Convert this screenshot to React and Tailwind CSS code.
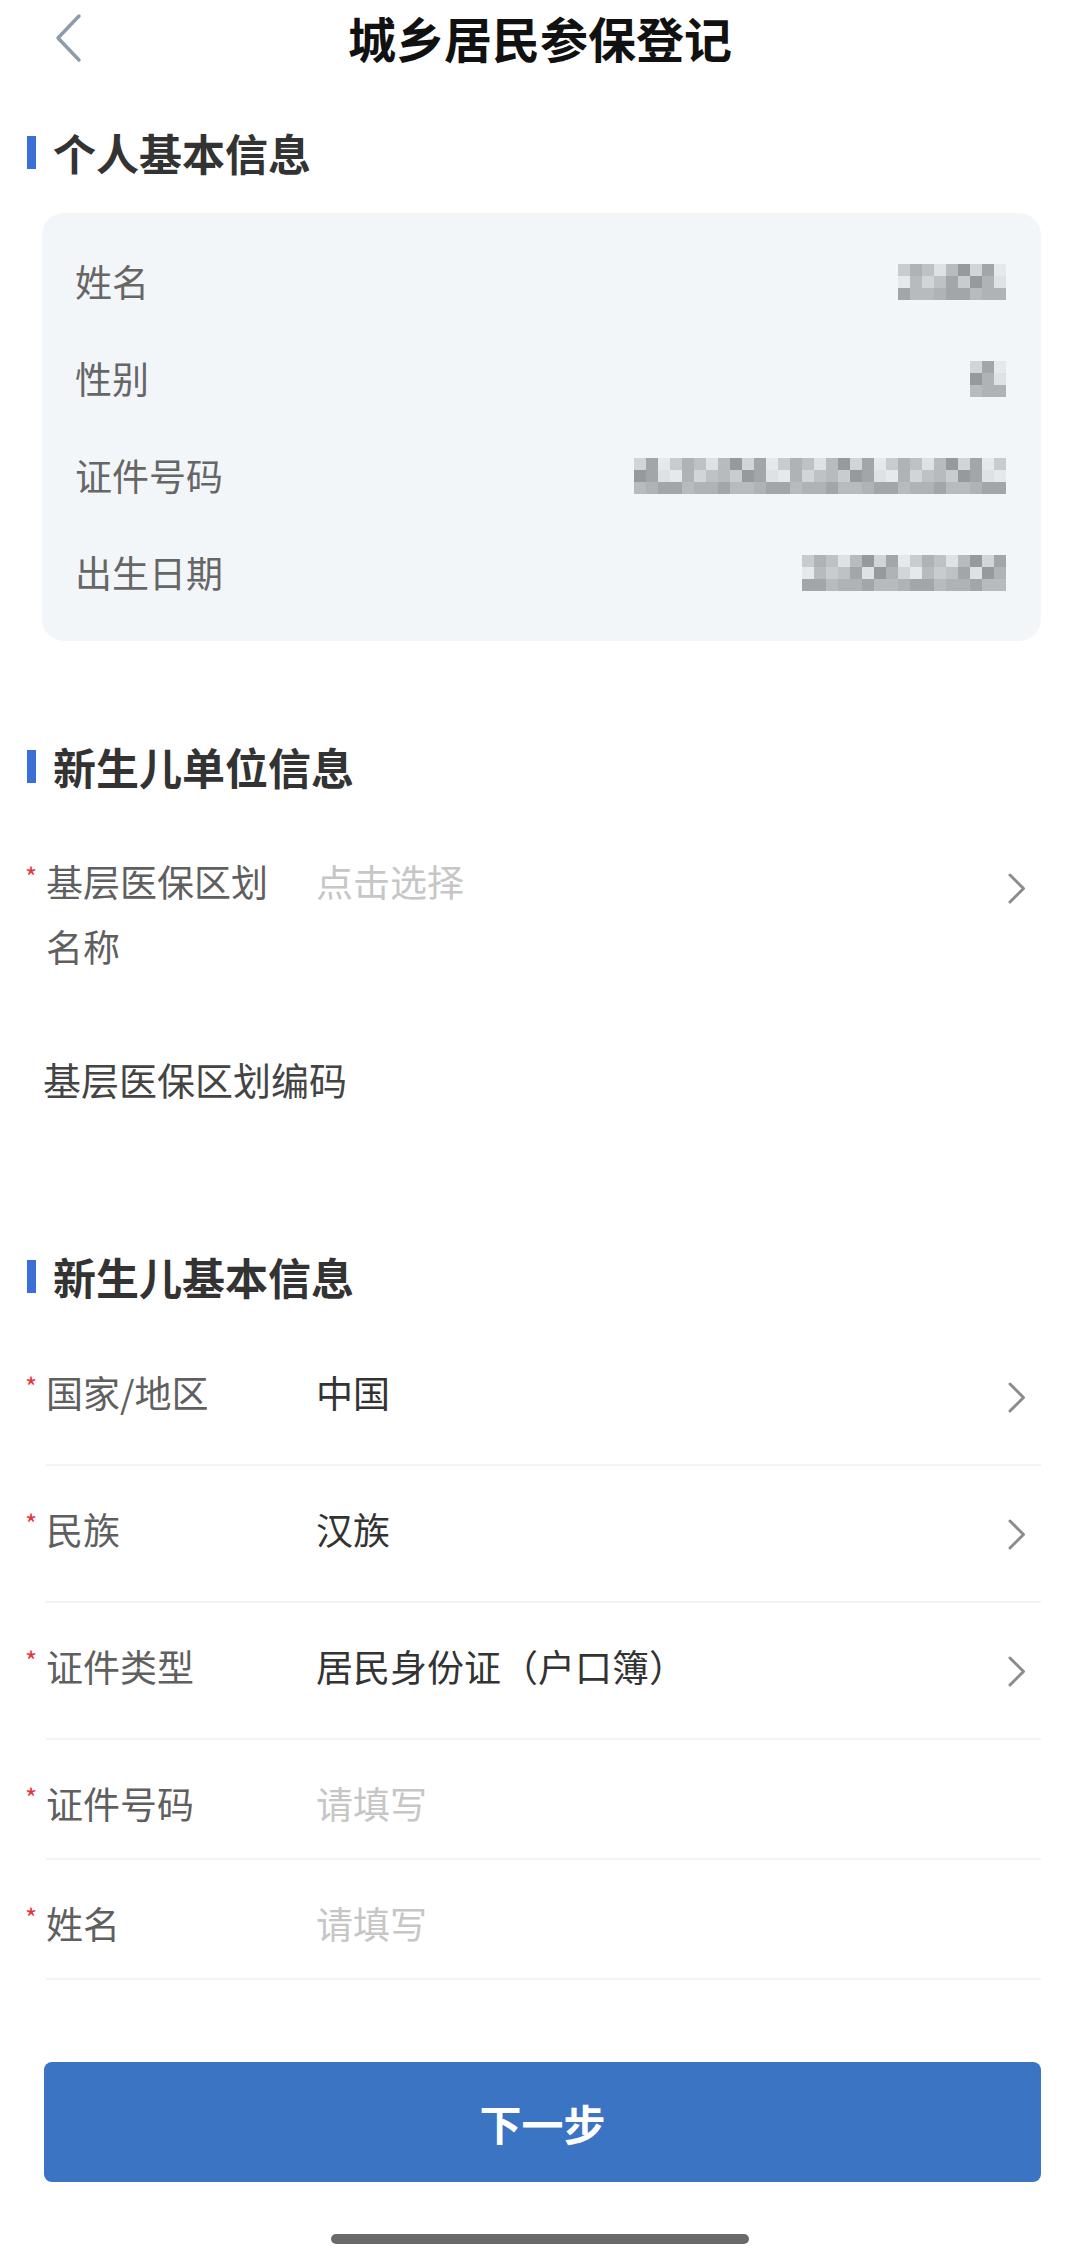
import React from 'react';

const shades = [
  'bg-[#dfe2e5]',
  'bg-[#a3a6a9]',
  'bg-[#bfc2c5]',
  'bg-[#d2d5d8]',
  'bg-[#b0b3b6]',
  'bg-[#979a9d]',
  'bg-[#c9ccce]',
  'bg-[#b8bbbe]',
  'bg-[#e6e9ec]',
];

// pixelated blur block standing in for hidden personal data
const Mosaic = ({ cols, seed }) => (
  <div className="flex flex-col">
    {[0, 1, 2].map((r) => (
      <div key={r} className="flex">
        {Array.from({ length: cols }).map((_, c) => (
          <div key={c} className={`w-[12px] h-[12px] ${shades[(c * 7 + r * 11 + seed * 5 + ((c * r + seed) % 3)) % shades.length]}`} />
        ))}
      </div>
    ))}
  </div>
);

const Chevron = () => (
  <svg width="18" height="31" viewBox="0 0 18 31" fill="none">
    <path d="M2 2 L15.5 15.5 L2 29" stroke="#8c8c8c" strokeWidth="3" strokeLinecap="round" strokeLinejoin="round" />
  </svg>
);

const SectionTitle = ({ children, className }) => (
  <div className={`h-[60px] flex items-center pl-[27px] ${className}`}>
    <div className="w-[9px] h-[33px] bg-[#3a6fd8]" />
    <div className="ml-[17px] text-[43px] leading-[60px] font-bold text-[#333]">{children}</div>
  </div>
);

const Star = () => (
  <span className="w-[21px] -ml-[21px] text-[26px] leading-[40px] text-[#e8333b] shrink-0">*</span>
);

const FormRow = ({ label, value, placeholder, arrow, tall }) => (
  <div className={`flex items-start pt-[37px] border-b-2 border-[#f3f3f3] ${tall ? 'h-[137px]' : 'h-[120px]'}`}>
    <div className="w-[270px] flex shrink-0">
      <Star />
      <span className="text-[37px] leading-[52px] text-[#5f5f5f]">{label}</span>
    </div>
    <div className={`flex-1 text-[37px] leading-[52px] ${value ? 'text-[#333]' : 'text-[#c6c6c6]'}`}>
      {value || placeholder}
    </div>
    {arrow && (
      <div className="mt-[16px] mr-[15px]">
        <Chevron />
      </div>
    )}
  </div>
);

export default function App() {
  const personal = [
    { label: '姓名', cols: 9, seed: 1 },
    { label: '性别', cols: 3, seed: 4 },
    { label: '证件号码', cols: 31, seed: 2 },
    { label: '出生日期', cols: 17, seed: 3 },
  ];

  return (
    <div className="w-[1080px] min-h-[2261px] bg-white font-['Noto_Sans_CJK_SC','Noto_Sans',sans-serif] flex flex-col">
      <div className="h-[74px] grid grid-cols-[1fr_auto_1fr] items-center">
        <div className="pl-[54px] pt-[2px]">
          <svg width="28" height="50" viewBox="0 0 28 50" fill="none">
            <path d="M25 3 L4 25 L25 47" stroke="#8e9bab" strokeWidth="3.5" strokeLinecap="round" strokeLinejoin="round" />
          </svg>
        </div>
        <div className="text-[48px] leading-[74px] font-bold text-[#111]">城乡居民参保登记</div>
        <div />
      </div>

      <SectionTitle className="mt-[48px]">个人基本信息</SectionTitle>

      <div className="mt-[31px] ml-[42px] mr-[39px] bg-[#f3f6f9] rounded-[22px] py-[20px] pl-[33px] pr-[35px]">
        {personal.map((p) => (
          <div key={p.label} className="h-[97px] flex items-center justify-between">
            <span className="text-[37px] text-[#666]">{p.label}</span>
            <Mosaic cols={p.cols} seed={p.seed} />
          </div>
        ))}
      </div>

      <SectionTitle className="mt-[95px]">新生儿单位信息</SectionTitle>

      <div className="ml-[46px] mr-[39px] pt-[53px] flex items-start">
        <div className="w-[270px] pr-[30px] flex shrink-0">
          <span className="w-[21px] -ml-[21px] text-[26px] leading-[54px] text-[#e8333b] shrink-0">*</span>
          <span className="text-[37px] leading-[65px] text-[#5f5f5f]">基层医保区划名称</span>
        </div>
        <div className="flex-1 text-[37px] leading-[65px] text-[#c6c6c6]">点击选择</div>
        <div className="mt-[24px] mr-[15px]">
          <Chevron />
        </div>
      </div>

      <div className="ml-[43px] mt-[67px] text-[38px] leading-[65px] text-[#444]">基层医保区划编码</div>

      <SectionTitle className="mt-[135px]">新生儿基本信息</SectionTitle>

      <div className="ml-[46px] mr-[39px] mt-[23px] flex flex-col">
        <FormRow label="国家/地区" value="中国" arrow tall />
        <FormRow label="民族" value="汉族" arrow tall />
        <FormRow label="证件类型" value="居民身份证（户口簿）" arrow tall />
        <FormRow label="证件号码" placeholder="请填写" />
        <FormRow label="姓名" placeholder="请填写" />
      </div>

      <button className="mt-[82px] ml-[44px] mr-[39px] h-[120px] rounded-[8px] bg-[#3a74c2] text-white text-[42px] font-bold">
        下一步
      </button>

      <div className="mt-[52px] mx-auto w-[418px] h-[10px] rounded-full bg-[#6a6a6a]" />
    </div>
  );
}
